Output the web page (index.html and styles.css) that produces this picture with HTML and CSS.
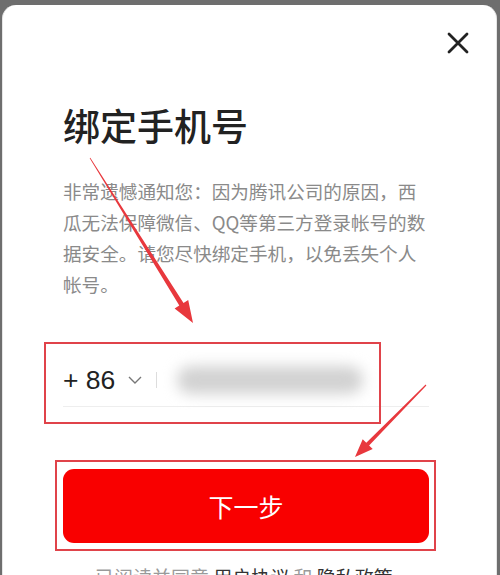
FILE: index.html
```html
<!DOCTYPE html>
<html lang="zh-CN">
  <head>
    <meta charset="UTF-8" />
    <meta name="viewport" content="width=device-width, initial-scale=1.0" />
    <title>绑定手机号</title>
    <link rel="stylesheet" href="styles.css">
  </head>
  <body>

      <div class="sheet">
          <div class="top">
              <svg class="close" width="22" height="22" viewBox="0 0 22 22">
                  <path d="M2 2 L20 20 M20 2 L2 20" stroke="#222" stroke-width="2.8" stroke-linecap="round" fill="none"/>
              </svg>
          </div>

          <div class="content">
              <h1 class="title">绑定手机号</h1>
              <p class="notice">非常遗憾通知您：因为腾讯公司的原因，西瓜无法保障微信、QQ等第三方登录帐号的数据安全。请您尽快绑定手机，以免丢失个人帐号。</p>

              <div class="phone">
                  <span class="code">+ 86</span>
                  <svg class="chevron" width="14" height="8" viewBox="0 0 14 8">
                      <path d="M1 1 L7 7 L13 1" stroke="#777" stroke-width="1.4" fill="none"/>
                  </svg>
                  <span class="divider"></span>
                  <span class="number"></span>
              </div>

              <button class="next">下一步</button>

              <p class="agree">已阅读并同意 <b>用户协议</b> 和 <b>隐私政策</b></p>
          </div>
      </div>

      <!-- red annotation marks drawn on top of the screenshot -->
      <div class="mark mark-phone"></div>
      <div class="mark mark-button"></div>
      <svg class="arrows" width="500" height="575" viewBox="0 0 500 575">
          <polygon fill="#e8383d" points="89.7,158.2 179.3,305.6 174.6,308.5 193,323 188.2,300.1 183.5,303 90.3,157.8"/>
          <polygon fill="#e8383d" points="425.6,384.6 366.3,442.8 362.7,439.3 355,457 372.7,449.1 369.1,445.6 426.4,385.4"/>
      </svg>

  </body>
</html>
```

FILE: styles.css
```css
body {
    margin: 0;
    height: 575px;
    overflow: hidden;
    background: #6e6e6e;
    font-family: "Noto Sans CJK SC", sans-serif;
}

.sheet {
    margin: 5px 3px 0 2px;
    height: 570px;
    background: #fff;
    border-left: 1px solid #e6e6e6;
    border-right: 1px solid #e6e6e6;
    border-radius: 14px 14px 0 0;
}

.top {
    display: flex;
    justify-content: flex-end;
    padding: 27px 27px 0 0;
}

.content {
    width: 366px;
    padding-left: 60px;
}

.title {
    margin: 53px 0 0;
    font-size: 37px;
    line-height: 37px;
    font-weight: 500;
    color: #222;
}

.notice {
    margin: 31px 0 0;
    width: 368px;
    font-size: 18.6px;
    line-height: 31px;
    color: #8a8a8a;
}

.phone {
    display: flex;
    align-items: center;
    height: 52px;
    margin-top: 55px;
    border-bottom: 1px solid #eeeeee;
}

.code {
    font-family: "Liberation Sans", Arial, sans-serif;
    font-size: 26.5px;
    color: #222;
}

.chevron {
    margin-left: 13px;
}

.divider {
    width: 1px;
    height: 16px;
    margin-left: 14px;
    background: #dddddd;
}

.number {
    width: 186px;
    height: 28px;
    margin-left: 20px;
    border-radius: 14px;
    background: #d2d2d2;
    filter: blur(7px);
}

.next {
    display: block;
    width: 366px;
    height: 74px;
    margin-top: 62px;
    border: 0;
    border-radius: 11px;
    background: #f90000;
    color: #fff;
    font-family: inherit;
    font-size: 25px;
}

.agree {
    margin: 24px 0 0 32px;
    font-size: 19px;
    line-height: 19px;
    color: #9a9a9a;
    white-space: nowrap;
}

.agree b {
    font-weight: 400;
    color: #333;
}

.mark {
    position: absolute;
    border: 2px solid #e0434a;
}

.mark-phone {
    left: 44px;
    top: 342px;
    width: 333px;
    height: 78px;
}

.mark-button {
    left: 55px;
    top: 460px;
    width: 377px;
    height: 87px;
}

.arrows {
    position: absolute;
    left: 0;
    top: 0;
}
```
